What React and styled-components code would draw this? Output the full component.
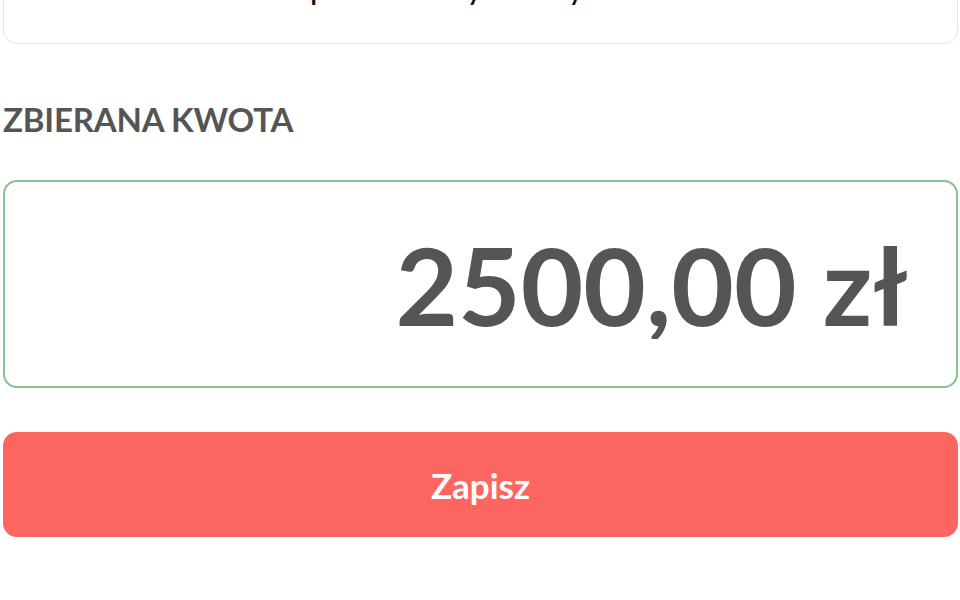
import React from "react";
import styled, { createGlobalStyle } from "styled-components";

const GlobalStyle = createGlobalStyle`
  html, body {
    margin: 0;
    padding: 0;
    background: #ffffff;
    overflow: hidden;
  }
  body {
    font-family: Lato, "Open Sans", sans-serif;
  }
`;

const Page = styled.div`
  width: 960px;
  height: 600px;
  padding: 0 2px 0 3px;
  box-sizing: border-box;
  display: flex;
  flex-direction: column;
`;

const TitleBox = styled.div`
  margin-top: -66px;
  height: 110px;
  box-sizing: border-box;
  border: 1.5px solid #e3e3e3;
  border-radius: 14px;
  display: flex;
  align-items: flex-end;
  padding: 0 24px 37px 32px;
`;

const TitleText = styled.span`
  font-size: 34px;
  line-height: 40px;
  color: #111;
  white-space: nowrap;
`;

const Label = styled.div`
  margin-top: 55px;
  font-size: 33px;
  line-height: 40px;
  font-weight: 700;
  color: #555555;
  letter-spacing: -0.2px;
`;

const AmountBox = styled.div`
  margin-top: 41px;
  height: 208px;
  box-sizing: border-box;
  border: 2px solid #86c195;
  border-radius: 14px;
  display: flex;
  align-items: center;
  padding: 0 48px 0 24px;
`;

const AmountInput = styled.input`
  width: 100%;
  border: none;
  outline: none;
  background: transparent;
  text-align: right;
  font-family: Lato, "Open Sans", sans-serif;
  font-size: 108px;
  line-height: 110px;
  height: 110px;
  padding: 0;
  font-weight: 700;
  color: #555555;
`;

const SaveButton = styled.button`
  margin-top: 44px;
  height: 105px;
  border: none;
  border-radius: 14px;
  background: #fd6561;
  color: #ffffff;
  font-family: Lato, "Open Sans", sans-serif;
  font-size: 35px;
  font-weight: 700;
  cursor: pointer;
`;

export default function App() {
  return (
    <>
      <GlobalStyle />
      <Page>
        <TitleBox>
          <TitleText>Wielka zrzutka na pomoc Ewy i Kuby</TitleText>
        </TitleBox>
        <Label>ZBIERANA KWOTA</Label>
        <AmountBox>
          <AmountInput defaultValue="2500,00 zł" />
        </AmountBox>
        <SaveButton>Zapisz</SaveButton>
      </Page>
    </>
  );
}
